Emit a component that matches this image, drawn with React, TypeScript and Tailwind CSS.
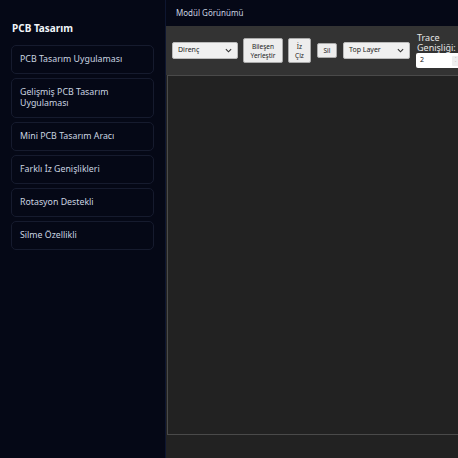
import React from "react";

const items = [
  "PCB Tasarım Uygulaması",
  "Gelişmiş PCB Tasarım Uygulaması",
  "Mini PCB Tasarım Aracı",
  "Farklı İz Genişlikleri",
  "Rotasyon Destekli",
  "Silme Özellikli",
];

function Chevron() {
  return (
    <svg width="7" height="5" viewBox="0 0 8 5" className="shrink-0">
      <path d="M1 1l3 3 3-3" fill="none" stroke="#333" strokeWidth="1.3" />
    </svg>
  );
}

export default function App() {
  return (
    <div
      className="flex w-[458px] h-[458px] overflow-hidden bg-[#050816]"
      style={{ fontFamily: '"Noto Sans", "Open Sans", sans-serif' }}
    >
      <aside className="w-[166px] shrink-0 bg-[#050816] border-r border-[#0e1630] px-[11px] pt-[21px]">
        <h2 className="text-[10px] font-bold text-[#f1f5f9] leading-[14px] mb-[10px] pl-[1px]">
          PCB Tasarım
        </h2>
        <div className="flex flex-col gap-[4px] w-[143px]">
          {items.map((t) => (
            <div
              key={t}
              className="rounded-[5px] border border-[#161b2e] pl-[8px] pr-[20px] py-[8px] text-[8.8px] leading-[11px] text-[#cbd5e1]"
            >
              {t}
            </div>
          ))}
        </div>
      </aside>
      <main className="flex-1 flex flex-col min-w-0">
        <div className="h-[26px] shrink-0 flex items-center pl-[10px] text-[8px] text-[#cbd5e1] bg-[#050816]">
          Modül Görünümü
        </div>
        <div className="flex-1 flex flex-col bg-[#222222] min-w-0">
          <div
            className="h-[49px] shrink-0 bg-[#333333] flex items-center gap-[5px] pl-[6px] whitespace-nowrap"
            style={{ fontFamily: '"Noto Sans", "DejaVu Sans", sans-serif' }}
          >
            <div className="w-[66px] h-[17px] shrink-0 rounded-[2px] bg-[#f0f0f0] border border-[#bbb] flex items-center justify-between px-[5px] text-[7px] text-[#222]">
              <span>Direnç</span>
              <Chevron />
            </div>
            <div className="w-[40px] h-[25px] shrink-0 rounded-[2px] bg-[#ededed] border border-[#aaa] flex flex-col items-center justify-center text-[6.5px] leading-[9px] text-[#222]">
              <span>Bileşen</span>
              <span>Yerleştir</span>
            </div>
            <div className="w-[23px] h-[25px] shrink-0 rounded-[2px] bg-[#ededed] border border-[#aaa] flex flex-col items-center justify-center text-[6.5px] leading-[9px] text-[#222]">
              <span>İz</span>
              <span>Çiz</span>
            </div>
            <div className="w-[20px] h-[15px] shrink-0 rounded-[2px] bg-[#ededed] border border-[#aaa] flex items-center justify-center text-[6.5px] text-[#222] ml-[1px]">
              Sil
            </div>
            <div className="w-[67px] h-[17px] shrink-0 rounded-[2px] bg-[#f0f0f0] border border-[#bbb] flex items-center justify-between px-[5px] text-[7px] text-[#222] ml-[1px]">
              <span>Top Layer</span>
              <Chevron />
            </div>
            <div className="flex flex-col shrink-0 ml-[1px]">
              <span className="text-[9px] leading-[10px] text-[#e5e5e5] pl-[1px]">Trace</span>
              <span className="text-[9px] leading-[10px] text-[#e5e5e5] pl-[1px]">Genişliği:</span>
              <div className="w-[48px] h-[15px] bg-white rounded-[2px] flex items-center justify-between pl-[4px] pr-[5px] text-[7px] text-[#111]">
                <span>2</span>
                <span className="w-[7px] h-[10px] bg-[#eee] rounded-[1px] flex flex-col items-center justify-center text-[4px] leading-[4px] text-[#888]">
                  <span>˄</span>
                  <span>˅</span>
                </span>
              </div>
            </div>
          </div>
          <div className="h-[360px] shrink-0 border-t border-l border-b border-[#4a4a4a] bg-[#222222] ml-[1px]" />
          <div className="flex-1 bg-[#222222]" />
        </div>
      </main>
    </div>
  );
}
